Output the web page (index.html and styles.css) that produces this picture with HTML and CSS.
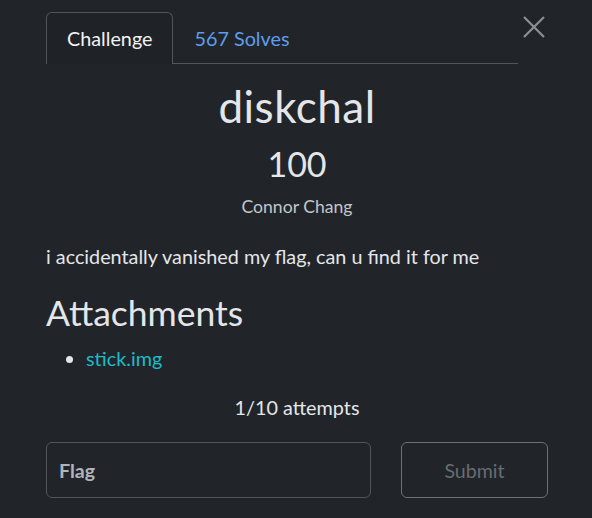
FILE: index.html
```html
<!DOCTYPE html>
<html lang="en">
<head>
<meta charset="utf-8">
<title>diskchal</title>
<link rel="stylesheet" href="styles.css">
</head>
<body>
<div class="modal">
  <div class="header">
    <ul class="tabs">
      <li class="tab active">Challenge</li>
      <li class="tab link">567 Solves</li>
    </ul>
    <button class="close" aria-label="Close">
      <svg width="22" height="22" viewBox="0 0 22 22"><path d="M1 1L21 21M21 1L1 21" stroke="#8c8f93" stroke-width="2.2" fill="none"/></svg>
    </button>
  </div>
  <div class="body">
    <h2 class="title">diskchal</h2>
    <h3 class="value">100</h3>
    <div class="author">Connor Chang</div>
    <p class="desc">i accidentally vanished my flag, can u find it for me</p>
    <h3 class="attach-h">Attachments</h3>
    <ul class="files"><li><a href="#">stick.img</a></li></ul>
    <p class="attempts">1/10 attempts</p>
    <form class="submit-row">
      <input class="flag" type="text" placeholder="Flag">
      <button class="submit" type="button">Submit</button>
    </form>
  </div>
</div>
</body>
</html>
```

FILE: styles.css
```css
html, body {
  margin: 0;
  padding: 0;
  background: #212529;
}
body {
  font-family: Lato, "Open Sans", sans-serif;
  color: #e4e6e9;
  width: 592px;
  height: 518px;
  overflow: hidden;
}
.modal {
  padding: 12px 44px 0 46px;
}
.header {
  display: flex;
  align-items: flex-start;
}
.tabs {
  flex: 1;
  display: flex;
  list-style: none;
  margin: 0;
  padding: 0;
  border-bottom: 1px solid #50555b;
  height: 51px;
}
.tab {
  box-sizing: border-box;
  height: 52px;
  padding: 0 20px;
  border: 1px solid transparent;
  border-bottom: none;
  border-radius: 6px 6px 0 0;
  font-size: 19.8px;
  line-height: 50px;
}
.tab.active {
  border-color: #50555b;
  background: #1f2226;
  color: #f1f2f4;
}
.tab.link {
  color: #5e9ded;
}
.close {
  width: 30px;
  height: 30px;
  margin-top: 0;
  padding: 0 0 0 5px;
  border: none;
  background: none;
  display: flex;
  align-items: center;
  justify-content: flex-start;
}
.body {
  text-align: center;
}
.title {
  margin: 16px 0 0;
  font-size: 44px;
  font-weight: 400;
  line-height: 52px;
  letter-spacing: 0.5px;
}
.value {
  margin: 11px 0 0;
  font-size: 34px;
  font-weight: 400;
  line-height: 41px;
}
.author {
  margin-top: 12px;
  font-size: 17.6px;
  line-height: 21px;
  color: #c3c6ca;
}
.desc {
  text-align: left;
  margin: 24px 0 0;
  font-size: 19.8px;
  line-height: 30px;
}
.attach-h {
  text-align: left;
  margin: 21px 0 0;
  font-size: 35.5px;
  font-weight: 400;
  line-height: 42px;
}
.files {
  text-align: left;
  margin: 9px 0 0;
  padding-left: 40px;
  font-size: 19.8px;
  line-height: 30px;
}
.files a {
  color: #1bbccb;
  text-decoration: none;
}
.attempts {
  margin: 19px 0 0;
  font-size: 19.8px;
  line-height: 30px;
}
.submit-row {
  margin-top: 20px;
  display: grid;
  grid-template-columns: 325px 147px;
  column-gap: 30px;
}
.flag, .submit {
  box-sizing: border-box;
  height: 56px;
  background: transparent;
  border: 1px solid #50555b;
  border-radius: 6px;
  font-family: Lato, sans-serif;
  font-size: 19.6px;
}
.flag {
  padding: 0 12px;
  color: #e4e6e9;
}
.flag::placeholder {
  color: #b0b4b8;
  font-weight: 700;
}
.submit {
  border-color: #6c7177;
  color: #676c72;
}
```
